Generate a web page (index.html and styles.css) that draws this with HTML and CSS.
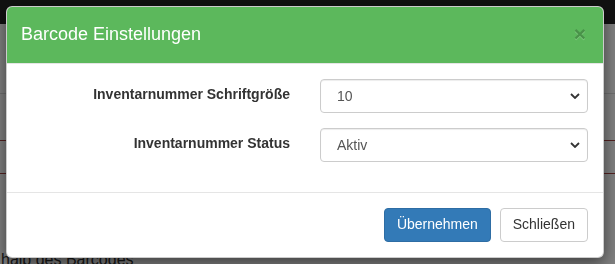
FILE: index.html
```html
<!DOCTYPE html>
<html lang="de">
<head>
  <meta charset="UTF-8">
  <title>Barcode Einstellungen</title>
  <link rel="stylesheet" href="styles.css">
</head>
<body>

  <div class="page">
    <div class="topbar"></div>
    <div class="rule rule-light"></div>
    <div class="rule rule-red first"></div>
    <div class="rule rule-red"></div>
    <p class="under">halb des Barcodes</p>
  </div>

  <div class="backdrop"></div>

  <div class="modal">
    <div class="modal-header">
      <span class="close">&times;</span>
      <h4 class="modal-title">Barcode Einstellungen</h4>
    </div>
    <div class="modal-body">
      <div class="form-group">
        <label class="control-label">Inventarnummer Schriftgröße</label>
        <div class="field">
          <select class="form-control">
            <option>10</option>
          </select>
        </div>
      </div>
      <div class="form-group">
        <label class="control-label">Inventarnummer Status</label>
        <div class="field">
          <select class="form-control">
            <option>Aktiv</option>
          </select>
        </div>
      </div>
    </div>
    <div class="modal-footer">
      <button class="btn btn-primary">Übernehmen</button>
      <button class="btn btn-default">Schließen</button>
    </div>
  </div>

</body>
</html>
```

FILE: styles.css
```css
html, body { margin: 0; height: 100%; overflow: hidden; }
body { font-family: "Liberation Sans", Arial, sans-serif; font-size: 14px; color: #333; background: #fff; }

.page { height: 100%; display: flex; flex-direction: column; }
.topbar { height: 24px; background: #222; flex: none; }
.rule { height: 1px; flex: none; }
.rule-light { margin-top: 69px; background: #ddd; }
.rule-red { background: #a94442; }
.rule-red.first { margin-top: 46px; }
.rule-red + .rule-red { margin-top: 32px; }
.under { margin: auto 0 0 1px; font-size: 16px; line-height: 20px; position: relative; top: 6px; }

.backdrop { position: fixed; inset: 0; background: rgba(0, 0, 0, 0.5); }

.modal {
  position: absolute; top: 6px; left: 6px; width: 596px;
  background: #fff; border: 1px solid rgba(0, 0, 0, 0.2); border-radius: 6px;
  box-shadow: 0 5px 15px rgba(0, 0, 0, 0.5);
  overflow: hidden;
}
.modal-header {
  background: #5cb85c; color: #fff; padding: 15px 15px 15px 14px;
  border-bottom: 1px solid #e5e5e5;
}
.modal-title { margin: 0; font-size: 18px; font-weight: normal; line-height: 1.42857; }
.close {
  float: right; font-size: 21px; font-weight: bold; line-height: 1;
  color: #000; opacity: 0.2; text-shadow: 0 1px 0 #fff; margin-top: 1px; margin-right: 2px;
}

.modal-body { padding: 15px; }
.form-group { display: flex; margin-bottom: 15px; }
.control-label {
  width: 50%; box-sizing: border-box; padding: 7px 15px 0 0;
  text-align: right; font-weight: bold;
}
.field { width: 50%; box-sizing: border-box; padding-left: 15px; }
.form-control {
  display: block; width: 100%; height: 34px; box-sizing: border-box;
  padding: 6px 30px 6px 16px; font-family: inherit; font-size: 14px; color: #555;
  background: #fff url("data:image/svg+xml,%3Csvg xmlns='http://www.w3.org/2000/svg' width='10' height='6' viewBox='0 0 10 6'%3E%3Cpath d='M1 1l4 4 4-4' fill='none' stroke='%23333' stroke-width='1.8'/%3E%3C/svg%3E") no-repeat right 7px center;
  border: 1px solid #ccc; border-radius: 4px;
  appearance: none; -webkit-appearance: none;
  box-shadow: inset 0 1px 1px rgba(0, 0, 0, 0.075);
}

.modal-footer { padding: 15px; border-top: 1px solid #e5e5e5; text-align: right; }
.btn {
  display: inline-block; height: 34px; padding: 6px 12px; font-family: inherit; font-size: 14px;
  line-height: 1.42857; border: 1px solid transparent; border-radius: 4px; box-sizing: border-box;
}
.btn + .btn { margin-left: 5px; }
.btn-primary { color: #fff; background: #337ab7; border-color: #2e6da4; }
.btn-default { color: #333; background: #fff; border-color: #ccc; }
```
